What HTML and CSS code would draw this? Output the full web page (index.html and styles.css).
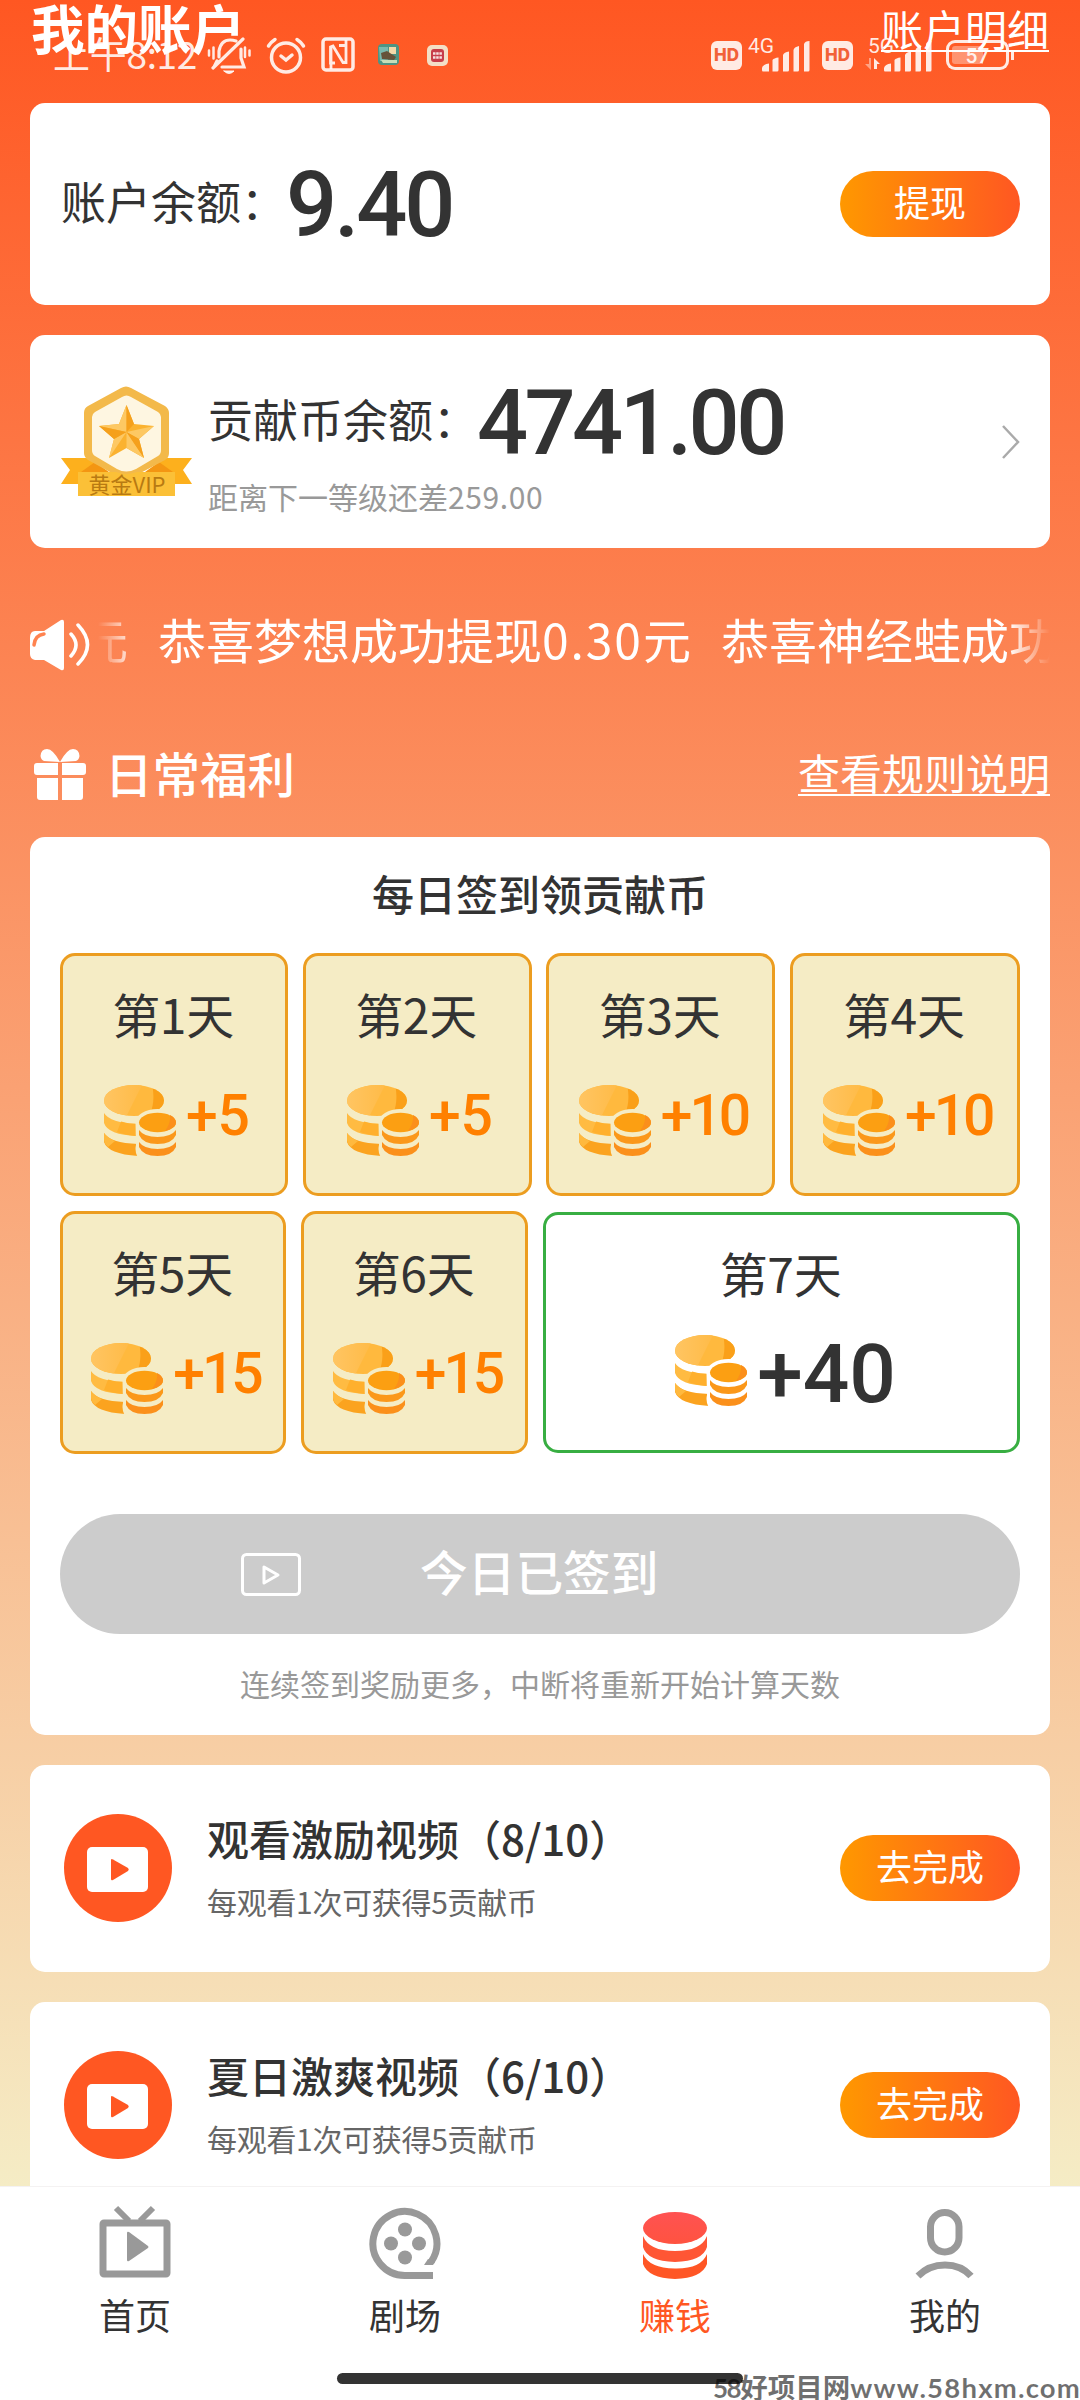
FILE: index.html
```html
<!DOCTYPE html>
<html lang="zh-CN">
<head>
<meta charset="utf-8">
<title>我的账户</title>
<link rel="stylesheet" href="styles.css">
</head>
<body>
<svg class="defs" width="0" height="0" aria-hidden="true">
  <defs>
    <linearGradient id="streak" x1="0" y1="0" x2="1" y2="0">
      <stop offset="0" stop-color="#ffc562"/><stop offset="1" stop-color="#ffbb48"/>
    </linearGradient>
    <linearGradient id="redcoin" x1="0" y1="0" x2="0" y2="1">
      <stop offset="0" stop-color="#ff5252"/><stop offset="1" stop-color="#ff5340"/>
    </linearGradient>
    <mask id="behind">
      <rect x="-2" y="-2" width="76" height="76" fill="#fff"/>
      <path d="M31.500 37.500a22 13.500 0 0 1 44 0V76H36Q30 68 32 60Z" fill="#000"/>
    </mask>
    <clipPath id="bigtop"><ellipse cx="30" cy="15.500" rx="30" ry="15.500"/></clipPath>
    <symbol id="coins" viewBox="0 0 72 72">
      <g mask="url(#behind)">
        <g clip-path="url(#bigtop)">
          <rect width="60" height="32" fill="#ffb93e"/>
          <path d="M0 0H38L22 32H0Z" fill="url(#streak)"/>
          <path d="M48 0Q52 16 45 32H62V0Z" fill="#faa019"/>
        </g>
        <path d="M0 28Q6 38 34 39L33 51Q4 50 0 38Z" fill="#ffbb42"/>
        <path d="M17 36.500Q25 39 34 39V51Q25 51 13 47Z" fill="#ffb02d"/>
        <path d="M0 48Q6 58 34 59V71Q4 69 0 57Z" fill="#fba31f"/>
        <path d="M0 48Q4 53 11 56L4 62Q0 58 0 55Z" fill="#ffb93e"/>
      </g>
      <ellipse cx="53.500" cy="37.500" rx="18.500" ry="9.700" fill="#fc9f12"/>
      <path d="M61 46Q67 38 66 30Q72 33 72 37.500Q72 43 61 46Z" fill="#fb8f1b"/>
      <path d="M35 45Q40 52 53.500 52T72 45V50Q68 59 53.500 59T35 50Z" fill="#fb981a"/>
      <path d="M35 57Q40 64 53.500 64T72 57V62Q68 71 53.500 71T35 62Z" fill="#fb901b"/>
    </symbol>
    <symbol id="signal" viewBox="0 0 48 31">
      <path d="M0 27Q1 23 7 22.500V30.500H1Q0 30.500 0 29ZM10.500 19Q12 17 16.500 16.500V29Q16.500 30.500 15 30.500H10.500ZM21 14Q22 11 27 10.500V29Q27 30.500 25.500 30.500H21ZM31.500 9Q32 6 37 5V29Q37 30.500 35.500 30.500H31.500ZM42 3Q43 0 47.500 0V29Q47.500 30.500 46 30.500H42Z"/>
    </symbol>
    <symbol id="player" viewBox="0 0 108 108">
      <circle cx="54" cy="54" r="54" fill="#ff5722"/>
      <rect x="23" y="33" width="61" height="45" rx="5" fill="#fff"/>
      <path d="M47 46Q47 44.500 49 45.500L64 54Q65.500 55.500 64 57L49 66Q47 67 47 65Z" fill="#ff5722"/>
    </symbol>
  </defs>
</svg>

<main class="page">
  <header class="header">
    <h1 class="title">我的账户</h1>
    <a class="link">账户明细</a>
  </header>

  <div class="statusbar">
    <div class="status-left">
      <span class="time">上午8:12</span>
      <svg class="bell" width="44" height="38" viewBox="0 0 44 38" fill="none" stroke="currentColor" stroke-width="3.200" stroke-linecap="round">
        <path d="M12 20V14Q14 3 23 3Q26 3 29 4M34 12V21L37 30H15M36 2L6 31M7 30L10 24"/>
        <path d="M2 13.500V18.500M6.500 10.500V21.500M42.500 13.500V18.500M38 10.500V20" stroke-width="2.500"/>
        <path d="M17 34H27Q22 39 17 34Z" fill="currentColor" stroke-width="1"/>
      </svg>
      <svg width="40" height="37" viewBox="0 0 40 37" fill="none" stroke="currentColor" stroke-width="3.500" stroke-linecap="round">
        <circle cx="20" cy="20.500" r="14.500"/><path d="M15 19L20 23L26 18M2.500 9Q5 5 9 2.500M37.500 9Q35 5 31 2.500"/>
      </svg>
      <svg width="34" height="35" viewBox="0 0 34 35" fill="none" stroke="currentColor" stroke-width="3.500">
        <rect x="2" y="2" width="30" height="31" rx="3"/><path d="M14 26H9.500V10L12 9L22 25.500H25V8.500H18M10 32V10M25 3V26" stroke-width="2.800"/>
      </svg>
      <svg class="app-one" width="21" height="21" viewBox="0 0 21 21">
        <rect width="21" height="21" rx="4" fill="#4e9483"/><path d="M1 3H10V17H2Z" fill="#79b9ae"/><path d="M11 3H18V10H11Z" fill="#f2d9a9"/><path d="M3 9L9 7L18 13L16 16L4 15Z" fill="#66533a"/><path d="M3 16H19V19H5Z" fill="#c7ddb8"/>
      </svg>
      <svg class="app-two" width="21" height="21" viewBox="0 0 21 21">
        <rect width="21" height="21" rx="5" fill="#f3dfc6"/><rect x="4" y="4" width="13" height="13" rx="3" fill="#c73d4a"/><path d="M6 8.500H15M6 12.500H15" stroke="#f7dfdf" stroke-width="2.500" stroke-dasharray="2.500 .7"/>
      </svg>
    </div>
    <div class="status-right">
      <span class="hd">HD</span>
      <span class="network">4G</span>
      <svg class="bars" width="48" height="31" fill="currentColor"><use href="#signal"/></svg>
      <span class="hd hd-two">HD</span>
      <span class="network network-two">5G<svg width="16" height="12" viewBox="0 0 16 12" fill="currentColor"><path d="M0 6H4V0H6V12Z" opacity=".5"/><path d="M9 0L15 6H12V11H9Z"/></svg></span>
      <svg class="bars bars-two" width="48" height="31" fill="currentColor"><use href="#signal"/></svg>
      <span class="battery">57</span>
    </div>
  </div>

  <section class="card balance">
    <span class="label">账户余额：</span>
    <strong class="amount">9.40</strong>
    <button class="pill">提现</button>
  </section>

  <section class="card level">
    <svg class="medal" width="132" height="111" viewBox="0 0 132 111">
      <path d="M0 72H36V98H0L9 84ZM131 72H95V98H131L122 84Z" fill="#fdb01d"/>
      <path d="M20 86L34 76L48 86ZM112 86L98 76L84 86Z" fill="#f49612"/>
      <path d="M60 2Q65 -1 70 2L104 20Q108 23 108 27V67Q108 72 104 74L70 92Q65 95 60 92L27 74Q23 71 23 67V27Q23 22 27 20Z" fill="#f3b94a"/>
      <path d="M61 11Q65.500 8 70 11L97 26Q100 28 100 31V64Q100 68 97 70L75 83Q65 88 56 83L34 70Q31 68 31 64V31Q31 28 34 26Z" fill="#fef6e1"/>
      <path d="M17 86H55Q65 90 76 86H114V110H17Z" fill="#fbc037"/>
      <path d="M65.500 19L73 38L93 40L78 53L83 72L65.500 62L48 72L53 53L38 40L58 38Z" fill="#fbb22f"/>
      <path d="M65.500 19V46L58 38ZM93 40L65.500 46L78 53ZM83 72L65.500 46V62ZM48 72L65.500 46L53 53ZM38 40L65.500 46L58 38Z" fill="#fdc863"/>
      <path d="M65.500 19V46L73 38ZM65.500 46L83 72L78 53ZM38 40L65.500 46L53 53Z" fill="#f5a01c"/>
      <text x="66" y="107" text-anchor="middle" textLength="77" class="medal-text">黄金VIP</text>
    </svg>
    <div class="level-body">
      <div class="level-row"><span class="label">贡献币余额：</span><strong class="amount">4741.00</strong></div>
      <p class="note">距离下一等级还差<span>259.00</span></p>
    </div>
    <svg class="chevron" width="18" height="34" viewBox="0 0 18 34" fill="none" stroke="#aaa" stroke-width="2.500"><path d="M1 1L16 17L1 33"/></svg>
  </section>

  <section class="notice">
    <svg width="60" height="52" viewBox="0 0 60 52">
      <path d="M5 12H14L31 1Q34 0 34 3V49Q34 52 31 51L14 41H5Q0 40 0 35V19Q0 12 5 12Z" fill="#fff"/>
      <path d="M4 26Q5 16 14 15" fill="none" stroke="#ff8350" stroke-width="3.500" stroke-linecap="round"/>
      <path d="M41 15Q51 26 41 37M48 6Q67 26 48 45" fill="none" stroke="#fff" stroke-width="3.500" stroke-linecap="round"/>
    </svg>
    <div class="ticker"><div class="ticker-track"><span>元</span><span>恭喜梦想成功提现<span class="sum">0.30</span>元</span><span>恭喜神经蛙成功</span></div></div>
  </section>

  <div class="section-head">
    <svg width="52" height="52" viewBox="0 0 52 52" fill="#fff">
      <path d="M26 13Q19 0 13 0Q7 0 6.500 7Q7 11 10 12ZM26 13Q33 0 39 0Q45 0 45.500 7Q45 11 42 12Z"/>
      <path d="M3 14H24V26H3Q0 26 0 23V17Q0 14 3 14ZM28 14H49Q52 14 52 17V23Q52 26 49 26H28ZM3 29H24V51H6Q3 51 3 48ZM28 29H49V48Q49 51 46 51H28Z"/>
    </svg>
    <h2>日常福利</h2>
    <a class="link">查看规则说明</a>
  </div>

  <section class="card checkin">
    <h3>每日签到领贡献币</h3>
    <div class="days days-four">
      <div class="day"><span class="day-name">第1天</span><span class="reward"><svg><use href="#coins"/></svg><b>+5</b></span></div>
      <div class="day"><span class="day-name">第2天</span><span class="reward"><svg><use href="#coins"/></svg><b>+5</b></span></div>
      <div class="day"><span class="day-name">第3天</span><span class="reward"><svg><use href="#coins"/></svg><b class="tens">+10</b></span></div>
      <div class="day"><span class="day-name">第4天</span><span class="reward"><svg><use href="#coins"/></svg><b class="tens">+10</b></span></div>
    </div>
    <div class="days days-three">
      <div class="day"><span class="day-name">第5天</span><span class="reward"><svg><use href="#coins"/></svg><b class="tens">+15</b></span></div>
      <div class="day"><span class="day-name">第6天</span><span class="reward"><svg><use href="#coins"/></svg><b class="tens">+15</b></span></div>
      <div class="day today"><span class="day-name">第7天</span><span class="reward"><svg><use href="#coins"/></svg><b>+40</b></span></div>
    </div>
    <button class="signed">
      <svg width="60" height="43" viewBox="0 0 60 43" fill="none" stroke="#fff" stroke-width="3"><rect x="1.500" y="1.500" width="57" height="40" rx="4"/><path d="M23 14V30L37 22Z" stroke-linejoin="round"/></svg>
      <span>今日已签到</span>
    </button>
    <p class="hint">连续签到奖励更多，中断将重新开始计算天数</p>
  </section>

  <section class="card task">
    <svg class="player"><use href="#player"/></svg>
    <div class="task-body"><h3>观看激励视频（8/10）</h3><p>每观看1次可获得5贡献币</p></div>
    <button class="pill">去完成</button>
  </section>
  <section class="card task">
    <svg class="player"><use href="#player"/></svg>
    <div class="task-body"><h3>夏日激爽视频（6/10）</h3><p>每观看1次可获得5贡献币</p></div>
    <button class="pill">去完成</button>
  </section>
</main>

<nav class="tabs">
  <a class="tab">
    <svg width="72" height="74" viewBox="0 0 72 74" fill="none" stroke="#999" stroke-width="7"><rect x="4" y="18" width="64" height="51" rx="1"/><path d="M17 3L30 16M54 3L41 16" stroke-width="6"/><path d="M28 28Q28 26 30 27L49 41Q50 42 49 43L30 56Q28 57 28 55Z" fill="#999" stroke="none"/></svg>
    <span>首页</span>
  </a>
  <a class="tab">
    <svg width="72" height="74" viewBox="0 0 72 74" fill="none" stroke="#999" stroke-width="7"><path d="M64 70.500H36A32 32 0 1 1 62 57"/><path d="M55 60L59 54L66 57L64 60Z" fill="#999" stroke="none"/><g fill="#999" stroke="none"><circle cx="36" cy="24.500" r="7"/><circle cx="36" cy="52.500" r="7"/><circle cx="22" cy="38.500" r="7"/><circle cx="50" cy="38.500" r="7"/></g></svg>
    <span>剧场</span>
  </a>
  <a class="tab active">
    <svg width="72" height="74" viewBox="0 0 72 74" fill="url(#redcoin)"><ellipse cx="36" cy="23" rx="32" ry="16"/><path d="M4 31Q10 46 36 46T68 31V42Q64 56 36 57Q8 56 4 42Z" fill="#ff5634"/><path d="M4 49Q10 63 36 63.500T68 49V59Q63 73 36 74Q9 73 4 59Z" fill="#ff5625"/></svg>
    <span>赚钱</span>
  </a>
  <a class="tab">
    <svg width="72" height="74" viewBox="0 0 72 74" fill="none" stroke="#999" stroke-width="7"><rect x="21.500" y="7.500" width="28.500" height="39.500" rx="14.250"/><path d="M9 71Q20 60 36 60T62 71"/></svg>
    <span>我的</span>
  </a>
</nav>
<div class="home-indicator"></div>
<div class="watermark"><b>58</b>好项目网<i>www.58hxm.com</i></div>
</body>
</html>
```
FILE: styles.css
```css
* { box-sizing: border-box; margin: 0; padding: 0; }

body {
  position: relative;
  width: 1080px;
  height: 2400px;
  overflow: hidden;
  display: flex;
  flex-direction: column;
  background: #fff;
  color: #333;
  font-family: "Noto Sans CJK SC", sans-serif;
}

.defs { position: absolute; }
svg { display: block; flex: none; }
button { border: 0; font: inherit; color: #fff; }

.page {
  height: 2186px;
  flex: none;
  overflow: hidden;
  padding: 0 30px;
  background: linear-gradient(#ff5722, #f5ecc5);
}

.header {
  height: 103px;
  display: flex;
  justify-content: space-between;
  align-items: flex-start;
  color: #fff;
}
.title { padding-left: 1px; font-size: 53.500px; line-height: 54px; font-weight: 700; }
.link {
  color: #fff;
  font-size: 42px;
  line-height: 56px;
  text-decoration: underline;
  text-decoration-thickness: 2px;
  text-underline-offset: 4px;
  text-decoration-skip-ink: none;
}
.header .link { margin-right: 1px; }

.statusbar {
  position: absolute;
  left: 0;
  top: 37px;
  width: 1080px;
  padding: 0 66px 0 53px;
  display: flex;
  justify-content: space-between;
  color: rgba(255, 255, 255, .88);
}
.status-left, .status-right { display: flex; align-items: flex-start; }
.status-left { gap: 15px; }
.time { width: 154px; margin-right: -15px; font-size: 37px; line-height: 32px; letter-spacing: -.3px; white-space: nowrap; }
.app-one { margin: 7px 0 0 8px; }
.app-two { margin: 8px 0 0 13px; }
.hd {
  width: 31px;
  height: 29px;
  margin-top: 4px;
  border-radius: 6px;
  background: rgba(255, 255, 255, .88);
  color: #f26138;
  font: 800 17px/29px Inter, sans-serif;
  text-align: center;
}
.hd-two { margin-left: 12px; }
.network { width: 20px; margin-left: 6px; font: 21px/19px Roboto, sans-serif; }
.network-two { width: 16px; margin-left: 15px; }
.network-two svg { margin: 2px 0 0 -3px; }
.bars { margin: 4px 0 0 -6px; }
.bars-two { margin-left: 0; }
.battery {
  position: relative;
  width: 63px;
  height: 30px;
  margin: 3px 5px 0 14px;
  border: 3px solid currentColor;
  border-radius: 9px;
  background: linear-gradient(90deg, rgba(255, 255, 255, .35) 60%, transparent 60%);
  background-clip: content-box;
  padding: 3px;
  font: 500 21px/20px Roboto, sans-serif;
  text-align: center;
}
.battery::after {
  content: "";
  position: absolute;
  right: -8px;
  top: 8px;
  width: 3px;
  height: 9px;
  background: currentColor;
}

.card { border-radius: 15px; background: #fff; padding: 0 30px; }
.card + .card { margin-top: 30px; }
.balance { height: 202px; display: flex; align-items: center; }
.label { font-size: 45px; line-height: 60px; white-space: nowrap; }
.balance .label { width: 225px; margin-top: -7px; padding-left: 1px; }
.amount { font: 500 90px/100px Roboto, sans-serif; letter-spacing: -3.600px; }
.balance .amount { margin: 3px 0 0 1px; letter-spacing: -3px; }
.pill {
  width: 180px;
  height: 66px;
  margin-left: auto;
  padding-bottom: 5px;
  border-radius: 33px;
  background: linear-gradient(90deg, #ff9800, #ff5722);
  font-size: 36px;
  line-height: 61px;
}

.level { height: 213px; display: flex; align-items: center; }
.medal { margin: -1px -1px 0 1px; }
.medal-text { font-size: 22px; fill: #b87a12; }
.level-body { margin-left: 16px; height: 213px; padding-top: 34px; }
.level-row { display: flex; height: 106px; }
.level-row .label { width: 269px; margin-top: 20px; }
.level-row .amount { line-height: 110px; }
.note { margin-top: -1px; color: #999; font-size: 30px; line-height: 44px; }
.note span { letter-spacing: .6px; }
.chevron { margin-left: auto; }

.notice { height: 190px; padding-top: 71px; display: flex; }
.ticker {
  flex: 1;
  margin-left: 8px;
  overflow: hidden;
  color: #fff;
  font-size: 48px;
  line-height: 58px;
  margin-top: -10px;
  mask-image: linear-gradient(90deg, transparent, #000 40px, #000 910px, transparent);
}
.ticker-track { display: flex; gap: 30px; width: max-content; margin-left: -18px; white-space: nowrap; }
.sum { letter-spacing: 1.900px; }

.section-head { height: 99px; padding-left: 4px; display: flex; align-items: flex-start; color: #fff; }
.section-head svg { margin-top: 11px; }
.section-head h2 { margin-left: 19px; font-size: 47.500px; line-height: 69px; font-weight: 500; }
.section-head .link { margin-left: auto; line-height: 67px; }

.checkin { height: 898px; }
.checkin h3 { padding-top: 25px; height: 116px; text-align: center; font-size: 42px; line-height: 61px; font-weight: 500; }
.days { display: grid; gap: 15px; height: 243px; align-items: center; }
.days-four { grid-template-columns: 228px 229px 229px 1fr; gap: 14.500px; }
.days-three { grid-template-columns: 226px 227px 1fr; margin-top: 15px; }
.day {
  height: 243px;
  border: 3px solid #ec9d20;
  border-radius: 15px;
  background: #f5ecc5;
  display: flex;
  flex-direction: column;
  align-items: center;
}
.day-name { margin: 22px 2px 0 0; font-size: 48px; line-height: 70px; height: 70px; letter-spacing: -.3px; }
.reward { display: flex; align-items: flex-start; margin-top: 37px; padding-left: 6px; }
.reward svg { width: 72px; height: 72px; }
.reward b { margin-left: 10px; color: #ff8000; font: 500 57px/61px Roboto, sans-serif; }
.reward .tens { letter-spacing: -3px; }
.today { height: 241px; border-color: #38ae42; background: #fff; }
.today .reward { margin-top: 28px; padding-left: 8px; }
.today .reward b { color: #333; font-size: 82px; line-height: 78px; }
.signed {
  width: 960px;
  height: 120px;
  margin-top: 60px;
  padding-left: 181px;
  border-radius: 60px;
  background: #ccc;
  display: flex;
  align-items: center;
}
.signed span { margin: -7px 0 0 119px; font-size: 47.700px; font-weight: 500; }
.hint { margin-top: 27px; text-align: center; color: #999; font-size: 30px; line-height: 44px; }

.task { height: 207px; padding-left: 34px; display: flex; align-items: center; }
.task .pill { margin-top: -1px; }
.player { width: 108px; height: 108px; margin-top: -1px; }
.task-body { margin-left: 35px; height: 207px; padding-top: 41px; }
.task h3 { font-size: 42px; line-height: 64px; font-weight: 500; white-space: nowrap; }
.task p { margin-top: 9px; color: #666; font-size: 30px; line-height: 44px; letter-spacing: -.3px; }

.tabs {
  height: 214px;
  flex: none;
  display: grid;
  grid-template-columns: repeat(4, 1fr);
  border-top: 1px solid #f4f2f2;
  background: #fff;
}
.tab { display: flex; flex-direction: column; align-items: center; padding-top: 18px; font-size: 36px; line-height: 52px; }
.tab span { margin-top: 9px; }
.active { color: #ff5722; }

.home-indicator { position: absolute; left: 337px; top: 2373px; width: 406px; height: 11px; border-radius: 6px; background: #333; }
.watermark {
  position: absolute;
  left: 713px;
  top: 2368px;
  white-space: nowrap;
  color: rgba(0, 0, 0, .56);
  font-size: 27.500px;
  line-height: 36px;
  font-weight: 700;
}
.watermark b { font: 700 26px/30px Lato, sans-serif; letter-spacing: -1.500px; }
.watermark i { font: 700 27.500px/30px Lato, sans-serif; letter-spacing: 1.200px; }
```
